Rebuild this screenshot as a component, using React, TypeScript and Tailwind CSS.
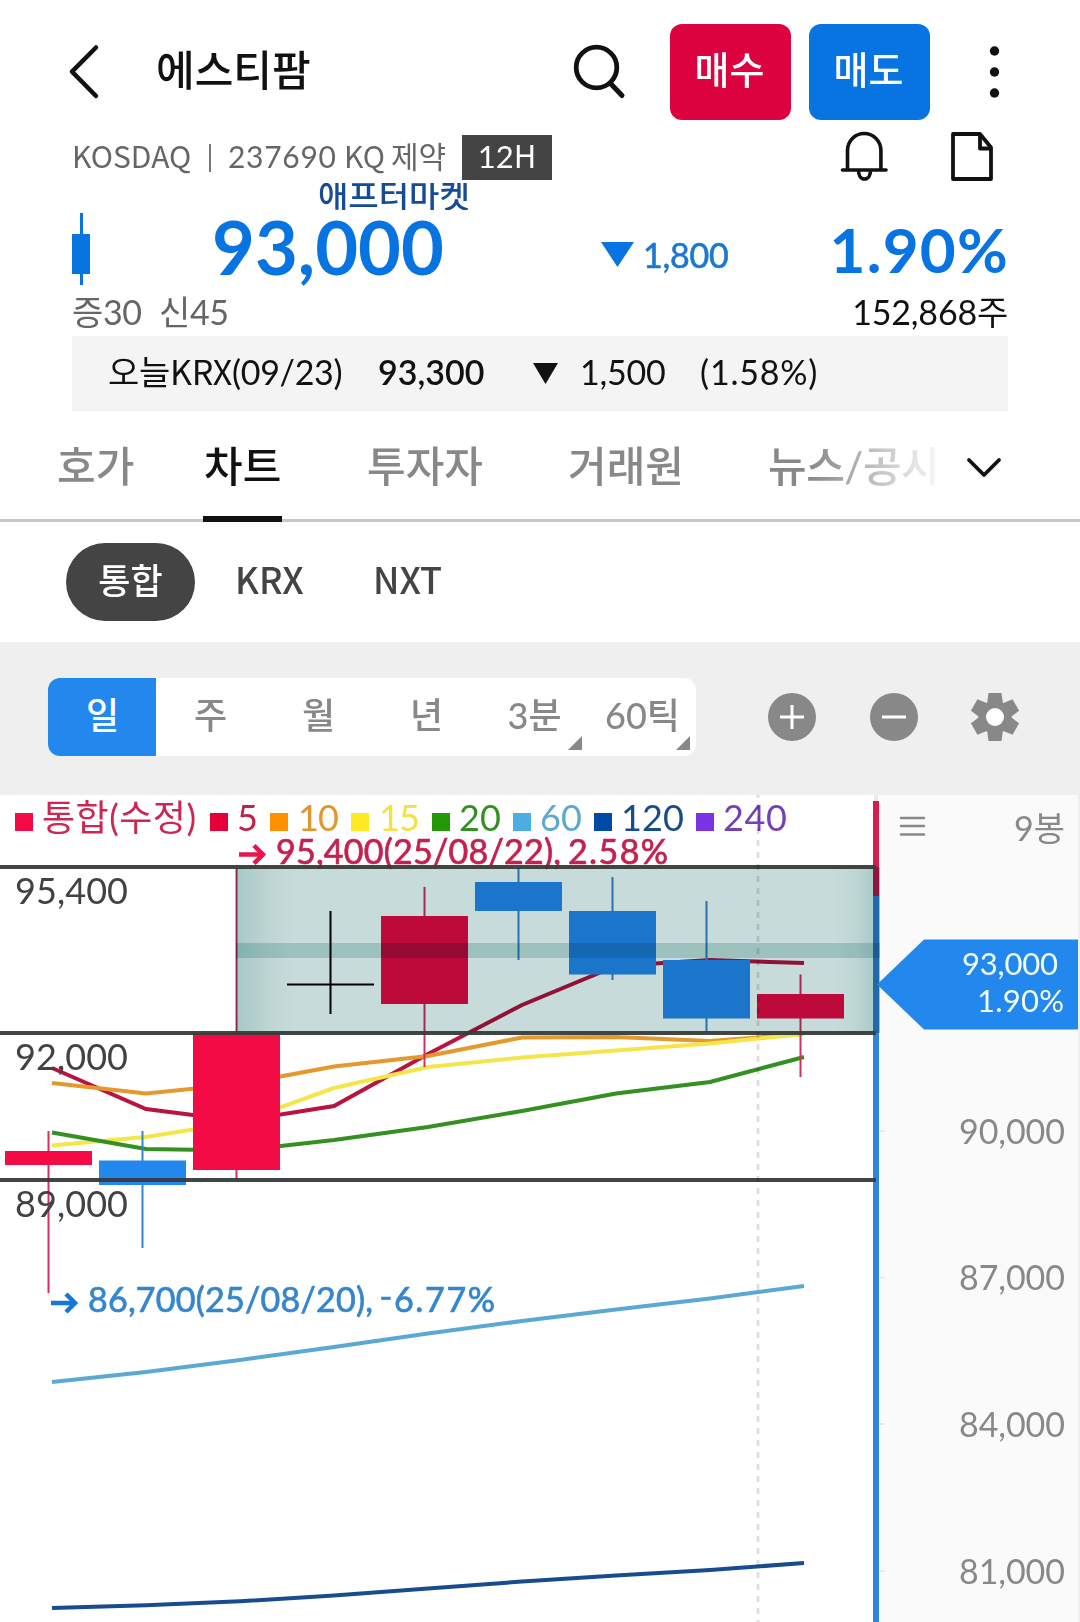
import { clsx } from "clsx";

const tabs = [
  { name: "호가", className: "ml-[57px] w-[147px]" },
  { name: "차트", className: "w-[163px]", active: true },
  { name: "투자자", className: "w-[201px]" },
  { name: "거래원", className: "w-[200px]" },
  { name: "뉴스/공시", className: "w-[171px] tracking-[-0.5px]" },
];

const periods = [
  { name: "일", active: true },
  { name: "주" },
  { name: "월" },
  { name: "년" },
  { name: "3분", more: true },
  { name: "60틱", more: true },
];

const legend = [
  { x: 15, textX: 42, width: 154, label: "통합(수정)", box: "#f20b45", text: "#cc2752" },
  { x: 210, textX: 237, width: 21, label: "5", box: "#e60039", text: "#bd2349" },
  { x: 270, textX: 298, width: 41, label: "10", box: "#ff9100", text: "#e3942b" },
  { x: 351, textX: 379, width: 41, label: "15", box: "#fee924", text: "#f2e245" },
  { x: 432, textX: 459, width: 42, label: "20", box: "#239908", text: "#348f22" },
  { x: 513, textX: 540, width: 42, label: "60", box: "#4aaee3", text: "#5ba9d3" },
  { x: 594, textX: 621, width: 63, label: "120", box: "#004aa6", text: "#184b8c" },
  { x: 696, textX: 723, width: 64, label: "240", box: "#7b32e2", text: "#7440b8" },
];

// x is the wick, the body is 87 wide around it
const candles = [
  { x: 48.5, high: 1131, low: 1293, top: 1151, bottom: 1165, up: true },
  { x: 142.5, high: 1131, low: 1248, top: 1160.5, bottom: 1185, up: false },
  { x: 236.5, high: 868, low: 1179, top: 1033, bottom: 1170, up: true },
  { x: 424.5, high: 887, low: 1067, top: 916, bottom: 1004, up: true },
  { x: 518.5, high: 868, low: 960, top: 882, bottom: 911, up: false },
  { x: 612.5, high: 877, low: 980, top: 911, bottom: 974.5, up: false },
  { x: 706.5, high: 901, low: 1032, top: 960, bottom: 1018.5, up: false },
  { x: 800.5, high: 974.5, low: 1077, top: 994, bottom: 1018.5, up: true },
];

const averages = [
  {
    color: "#b9143f",
    points: "52,1068 146,1109 240,1121 334,1106 428,1054 522,1005 616,966 710,960 804,963",
  },
  {
    color: "#e5982c",
    points: "52,1083 146,1093.5 240,1084 334,1066.5 428,1056 522,1037.5 616,1037 710,1041 804,1034",
  },
  {
    color: "#f4e54a",
    points: "52,1145.5 146,1137 240,1122 334,1088 428,1067 522,1057.5 616,1050.5 710,1043.5 804,1034",
  },
  {
    color: "#349022",
    points: "52,1132.5 146,1149 240,1150.5 334,1140 428,1127 522,1111 616,1093.5 710,1082 804,1057",
  },
  {
    color: "#59a9d4",
    points: "52,1382 146,1372 240,1360 334,1347 428,1333.5 522,1321 616,1309.5 710,1298.5 804,1286",
  },
  {
    color: "#174c90",
    points: "52,1608 146,1605.3 240,1601.3 334,1595.5 428,1588.5 522,1581.5 616,1575.5 710,1570 804,1563",
  },
];

const levels = [
  { y: 867, label: "95,400" },
  { y: 1033, label: "92,000" },
  { y: 1180, label: "89,000" },
];

const prices = [
  { y: 1131, label: "90,000" },
  { y: 1277.5, label: "87,000" },
  { y: 1424, label: "84,000" },
  { y: 1571, label: "81,000" },
];

const Header = () => {
  return (
    <header className="flex h-[120px] items-center pt-6">
      <svg className="ml-[66px] h-16 w-9" viewBox="0 0 36 64" fill="none">
        <path d="M30 7.5 6 31.7 30 56" stroke="#111" strokeWidth="4.5" strokeLinecap="round" strokeLinejoin="round" />
      </svg>
      <h1 className="ml-[54px] w-[416px] pb-1 text-[42px] font-medium leading-none text-[#111]">에스티팜</h1>
      <svg className="h-14 w-14" viewBox="572 44 56 56" fill="none" stroke="#111">
        <circle cx="596.5" cy="67.5" r="20.3" strokeWidth="4.8" />
        <path d="m611 84 11 11.5" strokeWidth="5" strokeLinecap="round" />
      </svg>
      <button className="ml-[42px] h-24 w-[121px] rounded-xl bg-[#dc0340] pb-1.5 pr-0.5 text-[38px] font-medium text-white">
        매수
      </button>
      <button className="ml-[18px] h-24 w-[121px] rounded-xl bg-[#0774e2] pb-1.5 pr-0.5 text-[38px] font-medium text-white">
        매도
      </button>
      <svg className="ml-[58px] h-14 w-3" viewBox="0 0 12 56" fill="#111">
        <circle cx="6.5" cy="7" r="4.7" />
        <circle cx="6.5" cy="28" r="4.7" />
        <circle cx="6.5" cy="49" r="4.7" />
      </svg>
    </header>
  );
};

const StockInfo = () => {
  return (
    <section>
      <div className="mt-[15px] flex h-[45px] items-center pl-[72px]">
        <div className="flex h-[45px] w-[390px] items-baseline whitespace-nowrap text-[30px] leading-[41px] text-[#666]">
          <span className="w-[137px] font-['Noto_Sans_CJK_KR',sans-serif]">KOSDAQ</span>
          <span className="h-7 w-[2px] self-center bg-[#777]" />
          <span className="ml-[17px] w-[116px] tracking-[0.7px]">237690</span>
          <span className="w-[47px] font-['Noto_Sans_CJK_KR',sans-serif]">KQ</span>
          <span>제약</span>
        </div>
        <div className="h-[45px] w-[90px] bg-[#444] text-center text-[31px] leading-[40px] text-white">
          12<span className="font-['Noto_Sans_CJK_KR',sans-serif]">H</span>
        </div>
        <svg className="-mt-1 ml-[287px] h-[52px] w-[50px]" viewBox="839 129 50 52" fill="none" stroke="#111" strokeWidth="3.6">
          <path d="M847.5 168.5v-19a16.700 17 0 0 1 33.4 0v19" />
          <path d="M842.5 169h43.5" strokeLinecap="round" />
          <path d="M858.5 169.5c0 5 2.4 8.5 6 8.5s6-3.5 6-8.5" />
        </svg>
        <svg className="-mt-1 ml-[60px] h-[52px] w-[46px]" viewBox="949 129 46 52" fill="none" stroke="#111" strokeWidth="3.8" strokeLinejoin="round">
          <path d="M953 133h27l11 13.5v31.5h-38z" />
          <path d="M980 133v14.5h11" />
        </svg>
      </div>

      <div className="mt-[3px] h-[27px] overflow-y-clip pl-[318px] text-[33px] font-medium leading-[24px] text-[#164b95]">
        애프터마켓
      </div>

      <div className="flex h-[78px] items-center whitespace-nowrap pl-[72px] text-[#0774e2]">
        <svg className="h-[72px] w-[18px]" viewBox="0 0 18 72" fill="currentColor">
          <path d="M8 0h3v72H8z" />
          <path d="M0 21h18v40H0z" />
        </svg>
        <strong className="ml-[122px] w-[389px] pb-[5px] text-[74px] font-bold leading-none">93,000</strong>
        <svg className="mt-2.5 h-[25px] w-[33px]" viewBox="0 0 33 25" fill="currentColor">
          <path d="M0 0h33L16.5 25z" />
        </svg>
        <span className="ml-[9px] w-[185px] pt-3 text-[34px] leading-none tracking-[-0.2px] text-[#1b77d0] [-webkit-text-stroke:0.6px_#1b77d0]">
          1,800
        </span>
        <strong className="w-[181px] text-right text-[62px] font-bold leading-none tracking-[1.2px]">1.90%</strong>
      </div>

      <div className="flex h-12 items-center px-[72px] text-[34px] leading-none tracking-[-0.4px]">
        <span className="w-[87px] text-[#666]">증30</span>
        <span className="text-[#666]">신45</span>
        <span className="ml-auto tracking-[-0.2px] text-[#111]">152,868주</span>
      </div>

      <div className="mx-[72px] flex h-[75px] items-center whitespace-nowrap bg-[#f4f4f4] pb-1 text-[34px] leading-none text-[#111]">
        <span className="ml-[36px] w-[270px] tracking-[-0.3px]">
          오늘<span className="font-['Noto_Sans_CJK_KR',sans-serif]">KRX</span>(09/23)
        </span>
        <span className="w-[155px] font-semibold">93,300</span>
        <svg className="mt-1 h-[21px] w-[25px]" viewBox="0 0 25 21" fill="currentColor">
          <path d="M0 0h25L12.5 21z" />
        </svg>
        <span className="ml-[22px] w-[120px] tracking-[-0.2px]">1,500</span>
        <span className="tracking-[0.8px]">(1.58%)</span>
      </div>
    </section>
  );
};

const Tabs = () => {
  return (
    <nav className="relative flex h-[111px] whitespace-nowrap border-b-[3px] border-[#c8c8c8] text-[42px] font-medium leading-[110px] text-[#888]">
      {tabs.map((item) => (
        <div key={item.name} className={clsx("relative h-[108px]", item.className, item.active && "text-[#111]")}>
          {item.name}
          {item.active && <span className="absolute -bottom-[3px] -left-[1px] h-1.5 w-[79px] bg-[#111]" />}
        </div>
      ))}
      <div className="absolute right-[140px] top-0 h-[105px] w-[130px] bg-linear-to-r from-white/0 to-white/95" />
      <svg className="ml-[26px] mt-[42px] h-7 w-10" viewBox="0 0 40 28" fill="none">
        <path d="m4 7 15 15L34 7" stroke="#111" strokeWidth="3.8" strokeLinecap="round" strokeLinejoin="round" />
      </svg>
    </nav>
  );
};

const Markets = () => {
  return (
    <div className="flex h-[120px] items-center pl-[66px] text-[36px] font-medium text-[#444]">
      <button className="h-[78px] w-[129px] rounded-full bg-[#444] pb-1 text-[35px] text-white">통합</button>
      <button className="ml-[40px] w-[138px] pb-2 text-left font-['Noto_Sans_CJK_KR',sans-serif]">KRX</button>
      <button className="pb-2 font-['Noto_Sans_CJK_KR',sans-serif]">NXT</button>
    </div>
  );
};

const Toolbar = () => {
  return (
    <div className="flex h-[153px] items-center bg-[#efefef] pb-[3px] pl-12">
      <div className="flex h-[78px] w-[648px] overflow-hidden rounded-xl bg-white">
        {periods.map((item) => (
          <button
            key={item.name}
            className={clsx(
              "relative w-[108px] pb-1 pl-px text-[36px] font-medium",
              item.active ? "bg-[#2288ee] text-white" : "text-[#888]"
            )}
          >
            {item.name}
            {item.more && (
              <svg className="absolute bottom-1.5 right-1.5 size-3.5" viewBox="0 0 14 14" fill="#888">
                <path d="M14 0v14H0z" />
              </svg>
            )}
          </button>
        ))}
      </div>
      <svg className="ml-[72px] size-12" viewBox="0 0 48 48">
        <circle cx="24" cy="24" r="24" fill="#888" />
        <path d="M12 24h24M24 12v24" stroke="#fff" strokeWidth="3" />
      </svg>
      <svg className="ml-[54px] size-12" viewBox="0 0 48 48">
        <circle cx="24" cy="24" r="24" fill="#888" />
        <path d="M12 24h24" stroke="#fff" strokeWidth="3" />
      </svg>
      <svg className="ml-[53px] size-12" viewBox="-24 -24 48 48">
        <circle r="16.5" fill="#888" />
        {[0, 60, 120].map((angle) => (
          <path key={angle} d="M-6.5-24h13l1.2 9v30l-1.2 9h-13l-1.2-9v-30z" fill="#888" transform={`rotate(${angle})`} />
        ))}
        <circle r="9" fill="#fff" />
      </svg>
    </div>
  );
};

const Chart = () => {
  return (
    <svg className="block h-[827px] w-[1080px]" viewBox="0 795 1080 827">
      <defs>
        <linearGradient id="zone">
          <stop offset="0" stopColor="#a6c8c6" />
          <stop offset="0.05" stopColor="#bdd5d3" />
          <stop offset="0.09" stopColor="#c7dcda" />
          <stop offset="0.93" stopColor="#c7dcda" />
          <stop offset="0.965" stopColor="#bcd5d3" />
          <stop offset="1" stopColor="#a3c6c4" />
        </linearGradient>
      </defs>

      <rect x="0" y="795" width="879" height="827" fill="#fff" />
      <rect x="879" y="795" width="199" height="827" fill="#fafafa" />
      <rect x="1078" y="795" width="2" height="827" fill="#efefef" />

      {averages.map((item) => (
        <polyline key={item.color} points={item.points} fill="none" stroke={item.color} strokeWidth="4" />
      ))}

      {candles.map((item) => (
        <g key={item.x} fill={item.up ? "#f20b45" : "#2288ee"}>
          <rect
            x={item.x - 1}
            y={item.high}
            width="2"
            height={item.low - item.high}
            fill={item.up ? "#d4305f" : "#3386cd"}
          />
          <rect x={item.x - 43.5} y={item.top} width="87" height={item.bottom - item.top} />
        </g>
      ))}
      <path d="M287 984.5h87M330.5 911v103" stroke="#000" strokeWidth="2" />

      <rect x="873" y="801" width="6" height="95" fill="#d81c4e" />
      <rect x="873" y="896" width="6" height="726" fill="#2e86d8" />
      <rect x="874" y="795" width="4" height="6" fill="#f3e9ec" />

      <g className="font-['Lato','Noto_Sans_CJK_KR',sans-serif]">
        {legend.map((item) => (
          <g key={item.label}>
            <rect x={item.x} y="813" width="18" height="18" fill={item.box} />
            <text x={item.textX} y="831" fontSize="36" textLength={item.width} fill={item.text}>
              {item.label}
            </text>
          </g>
        ))}

        {/* high and low of the visible range */}
        <g fontSize="34" strokeWidth="0.7">
          <path d="M239 854.5h24M254 845.5l9 9-9 9" fill="none" stroke="#e8164c" strokeWidth="4.5" />
          <g fill="#c4214e" stroke="#c4214e">
            <text x="276" y="863.5" textLength="285">
              95,400(25/08/22),
            </text>
            <text x="568" y="863.5" textLength="100">
              2.58%
            </text>
          </g>
          <path d="M51 1303h24M66 1294l9 9-9 9" fill="none" stroke="#1477dc" strokeWidth="4.5" />
          <g fill="#3586cc" stroke="#3586cc">
            <text x="88" y="1311.5" textLength="285">
              86,700(25/08/20),
            </text>
            <text x="380" y="1308" className="font-['Noto_Sans_CJK_KR',sans-serif]">
              -
            </text>
            <text x="394" y="1311.5" textLength="101">
              6.77%
            </text>
          </g>
        </g>

        {/* supply zone */}
        <rect x="236" y="867" width="644" height="166" fill="url(#zone)" className="mix-blend-multiply" />
        <rect x="236" y="943" width="644" height="15" fill="#c9e1df" className="mix-blend-multiply" />

        {levels.map((item) => (
          <g key={item.label} fill="#424242">
            <rect x="0" y={item.y - 2} width="876" height="4" fill="#373b3a" opacity="0.95" />
            <text x="15" y={item.y + 37} fontSize="36" textLength="113">
              {item.label}
            </text>
          </g>
        ))}

        <path d="M758 792v830" stroke="#000" strokeOpacity="0.12" strokeWidth="3" strokeDasharray="6 6" />

        <path d="M901 818h23M901 826h23M901 834.5h23" stroke="#888" strokeWidth="2.5" strokeLinecap="round" />
        <text x="1065" y="840.5" fontSize="34" textAnchor="end" fill="#888">
          9봉
        </text>

        {prices.map((item) => (
          <g key={item.label}>
            <rect x="880" y={item.y - 1} width="5" height="2" fill="#e8e8e8" />
            <text x="959" y={item.y + 12.5} fontSize="34" textLength="106" fill="#888">
              {item.label}
            </text>
          </g>
        ))}

        <path d="M877 984.5 924 939.5h154v90H924z" fill="#2288ee" />
        <g fontSize="31" fill="#f2fdff">
          <text x="962" y="975" textLength="96">
            93,000
          </text>
          <text x="977" y="1011.5" textLength="87">
            1.90%
          </text>
        </g>
      </g>
    </svg>
  );
};

const App = () => {
  return (
    <main className="h-[1622px] w-[1080px] overflow-hidden bg-white font-['Lato','Noto_Sans_CJK_KR',sans-serif]">
      <Header />
      <StockInfo />
      <Tabs />
      <Markets />
      <Toolbar />
      <Chart />
    </main>
  );
};

export default App;
